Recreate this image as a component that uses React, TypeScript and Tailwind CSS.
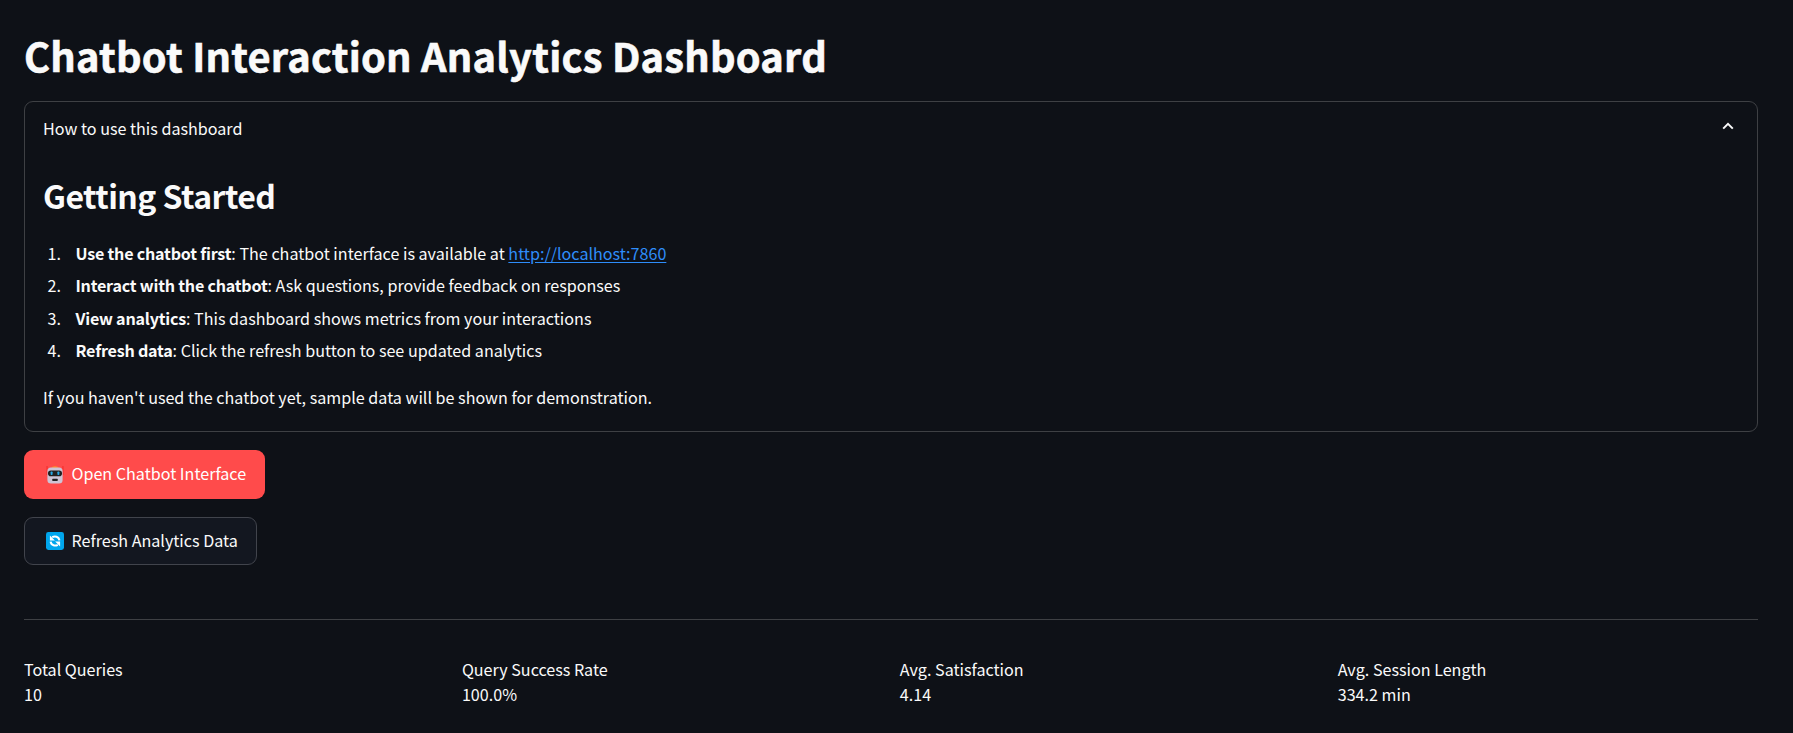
const steps = [
  { title: 'Use the chatbot first', text: 'The chatbot interface is available at ', link: 'http://localhost:7860' },
  { title: 'Interact with the chatbot', text: 'Ask questions, provide feedback on responses' },
  { title: 'View analytics', text: 'This dashboard shows metrics from your interactions' },
  { title: 'Refresh data', text: 'Click the refresh button to see updated analytics' },
];

const metrics = [
  ['Total Queries', '10'],
  ['Query Success Rate', '100.0%'],
  ['Avg. Satisfaction', '4.14'],
  ['Avg. Session Length', '334.2 min'],
];

function RobotIcon() {
  return (
    <svg width="18" height="18" viewBox="0 0 18 18" className="shrink-0">
      <path d="M5.5 2.2C5.8.9 7.2 0 9 0s3.2.9 3.5 2.2z" fill="#ff822d" />
      <rect x="0.4" y="0" width="1.3" height="9" rx=".6" fill="#f8312f" />
      <rect x="16.3" y="0" width="1.3" height="9" rx=".6" fill="#f8312f" />
      <rect x="1.4" y="1.6" width="15.2" height="16" rx="3.6" fill="#cdc4d6" />
      <rect x="2" y="4.4" width="14" height="5.8" rx="2.8" fill="#212121" />
      <rect x="4.6" y="5.4" width="2" height="3.6" rx=".8" fill="#26a9e8" />
      <rect x="11.4" y="5.4" width="2" height="3.6" rx=".8" fill="#26a9e8" />
      <rect x="6.2" y="12.7" width="5.6" height="2.2" rx=".7" fill="#212121" />
    </svg>
  );
}

function RefreshIcon() {
  return (
    <svg width="18" height="18" viewBox="0 0 18 18" className="shrink-0">
      <rect width="18" height="18" rx="2.4" fill="#00a6ed" />
      <g fill="none" stroke="#fff" strokeWidth="2">
        <path d="M6.2 5.2C8.6 3.8 12.8 4.2 13.4 8.4" />
        <path d="M11.8 12.8C9.4 14.2 5.2 13.8 4.6 9.6" />
      </g>
      <path d="M3.9 3.5v5h5zM14.1 14.5v-5H9.1z" fill="#fff" />
    </svg>
  );
}

export default function App() {
  return (
    <main className="h-[733px] w-full overflow-hidden bg-[#0e1117] pl-6 pr-[35px] pt-[29px] font-['Noto_Sans_CJK_SC','Noto_Sans_CJK_JP',sans-serif] text-[16.12px] text-[#fafafa]">
      <h1 className="h-[72px] whitespace-nowrap text-[39.8px] leading-[51px] font-bold tracking-[0.23px] [-webkit-text-stroke:0.6px_#fafafa]">
        Chatbot Interaction Analytics Dashboard
      </h1>

      <section className="h-[331px] rounded-[9px] border border-[#3e4044] px-[18px]">
        <div className="flex h-[52px] items-center justify-between">
          <span>How to use this dashboard</span>
          <svg width="12" height="8" viewBox="0 0 12 8" className="mr-[5px] mb-1" fill="none" stroke="#fafafa" strokeWidth="2">
            <path d="M1.2 6.6 6 1.8l4.8 4.8" />
          </svg>
        </div>
        <h2 className="mt-[19px] text-[32px] leading-[44px] font-bold tracking-[-0.55px]">Getting Started</h2>
        <ol className="mt-[19.7px]">
          {steps.map((step, i) => (
            <li key={step.title} className="flex h-[32.5px] items-center whitespace-pre">
              <span className="w-[32.5px] pl-[4.5px]">{i + 1}.</span>
              <span>
                <strong className="font-bold tracking-[-0.22px]">{step.title}</strong>: {step.text}
                {step.link && (
                  <a href={step.link} className="text-[#2e8dfa] underline underline-offset-[1.5px]">
                    {step.link}
                  </a>
                )}
              </span>
            </li>
          ))}
        </ol>
        <p className="mt-[14px] leading-[32px]">If you haven't used the chatbot yet, sample data will be shown for demonstration.</p>
      </section>

      <div className="mt-[18px] flex flex-col items-start gap-[18px]">
        <button className="flex h-[49px] w-[241px] items-center gap-[7.5px] rounded-[9px] bg-[#ff4b4b] pl-[22px] whitespace-nowrap text-white">
          <RobotIcon />
          <span className="pb-[3px]">Open Chatbot Interface</span>
        </button>
        <button className="flex h-[48px] w-[233px] items-center gap-[7.5px] rounded-[9px] border border-[#41444c] bg-[#131720] pl-[21px] whitespace-nowrap">
          <RefreshIcon />
          <span className="pb-[2px]">Refresh Analytics Data</span>
        </button>
      </div>

      <hr className="mt-[54px] border-t border-[#3e4044]" />

      <div className="mt-[37px] grid grid-cols-4 gap-[17.6px] leading-[25px]">
        {metrics.map(([label, value]) => (
          <div key={label}>
            <p>{label}</p>
            <p>{value}</p>
          </div>
        ))}
      </div>
    </main>
  );
}
